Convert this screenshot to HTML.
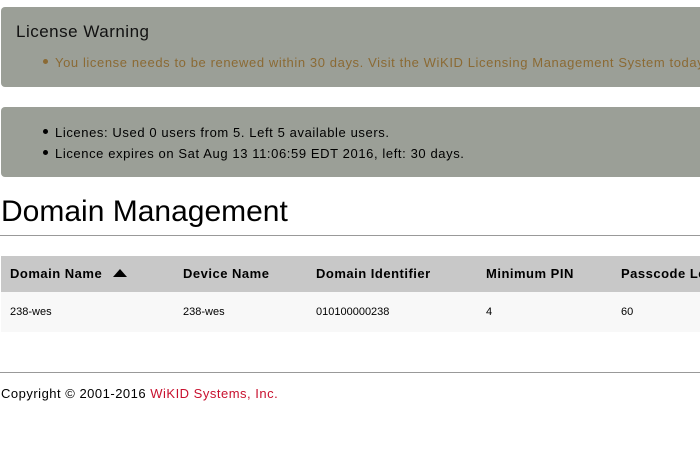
<!DOCTYPE html>
<html><head><style>
body{margin:0;width:700px;height:450px;overflow:hidden;background:#fff;font-family:"Liberation Sans",sans-serif;position:relative}
.box{position:absolute;left:1px;width:720px;background:#9b9f97;border-radius:4px}
.a{position:absolute;white-space:nowrap}
.s{letter-spacing:0.6px}
.h{letter-spacing:0.5px}
.dot{display:inline-block;width:5px;height:5px;border-radius:50%;margin-right:7px;vertical-align:middle;position:relative;top:-2px}
</style></head><body>
<div class="box" style="top:7px;height:80px"></div>
<div class="a h" style="left:16px;top:22px;font-size:17px;color:#111">License Warning</div>
<div class="a s" style="left:43px;top:55px;font-size:13px;color:#8b6a34"><span class="dot" style="background:#8b6a34"></span>You license needs to be renewed within 30 days. Visit the WiKID Licensing Management System today</div>
<div class="box" style="top:107px;height:70px"></div>
<div class="a s" style="left:43px;top:125px;font-size:13px;color:#000"><span class="dot" style="background:#000"></span>Licenes: Used 0 users from 5. Left 5 available users.</div>
<div class="a s" style="left:43px;top:146px;font-size:13px;color:#000"><span class="dot" style="background:#000"></span>Licence expires on Sat Aug 13 11:06:59 EDT 2016, left: 30 days.</div>
<div class="a" style="left:1px;top:195px;font-size:30px;color:#000">Domain Management</div>
<div class="a" style="left:0;top:235px;width:700px;height:1px;background:#999"></div>
<div class="a" style="left:1px;top:256px;width:700px;height:36px;background:#c8c8c8"></div>
<div class="a" style="left:1px;top:292px;width:700px;height:40px;background:#f8f8f8"></div>
<div class="a h" style="top:266px;left:10px;font-size:13px;font-weight:bold">Domain Name</div>
<div class="a" style="top:269px;left:113px;width:0;height:0;border-left:7px solid transparent;border-right:7px solid transparent;border-bottom:8px solid #000"></div>
<div class="a h" style="top:266px;left:183px;font-size:13px;font-weight:bold">Device Name</div>
<div class="a h" style="top:266px;left:316px;font-size:13px;font-weight:bold">Domain Identifier</div>
<div class="a h" style="top:266px;left:486px;font-size:13px;font-weight:bold">Minimum PIN</div>
<div class="a h" style="top:266px;left:621px;font-size:13px;font-weight:bold">Passcode Length</div>
<div class="a" style="top:306px;left:10px;font-size:11px">238-wes</div>
<div class="a" style="top:306px;left:183px;font-size:11px">238-wes</div>
<div class="a" style="top:306px;left:316px;font-size:11px">010100000238</div>
<div class="a" style="top:306px;left:486px;font-size:11px">4</div>
<div class="a" style="top:306px;left:621px;font-size:11px">60</div>
<div class="a" style="left:0;top:372px;width:700px;height:1px;background:#999"></div>
<div class="a h" style="left:1px;top:386px;font-size:13px;color:#000">Copyright © 2001-2016 <span style="color:#c8102e">WiKID Systems, Inc.</span></div>
</body></html>
